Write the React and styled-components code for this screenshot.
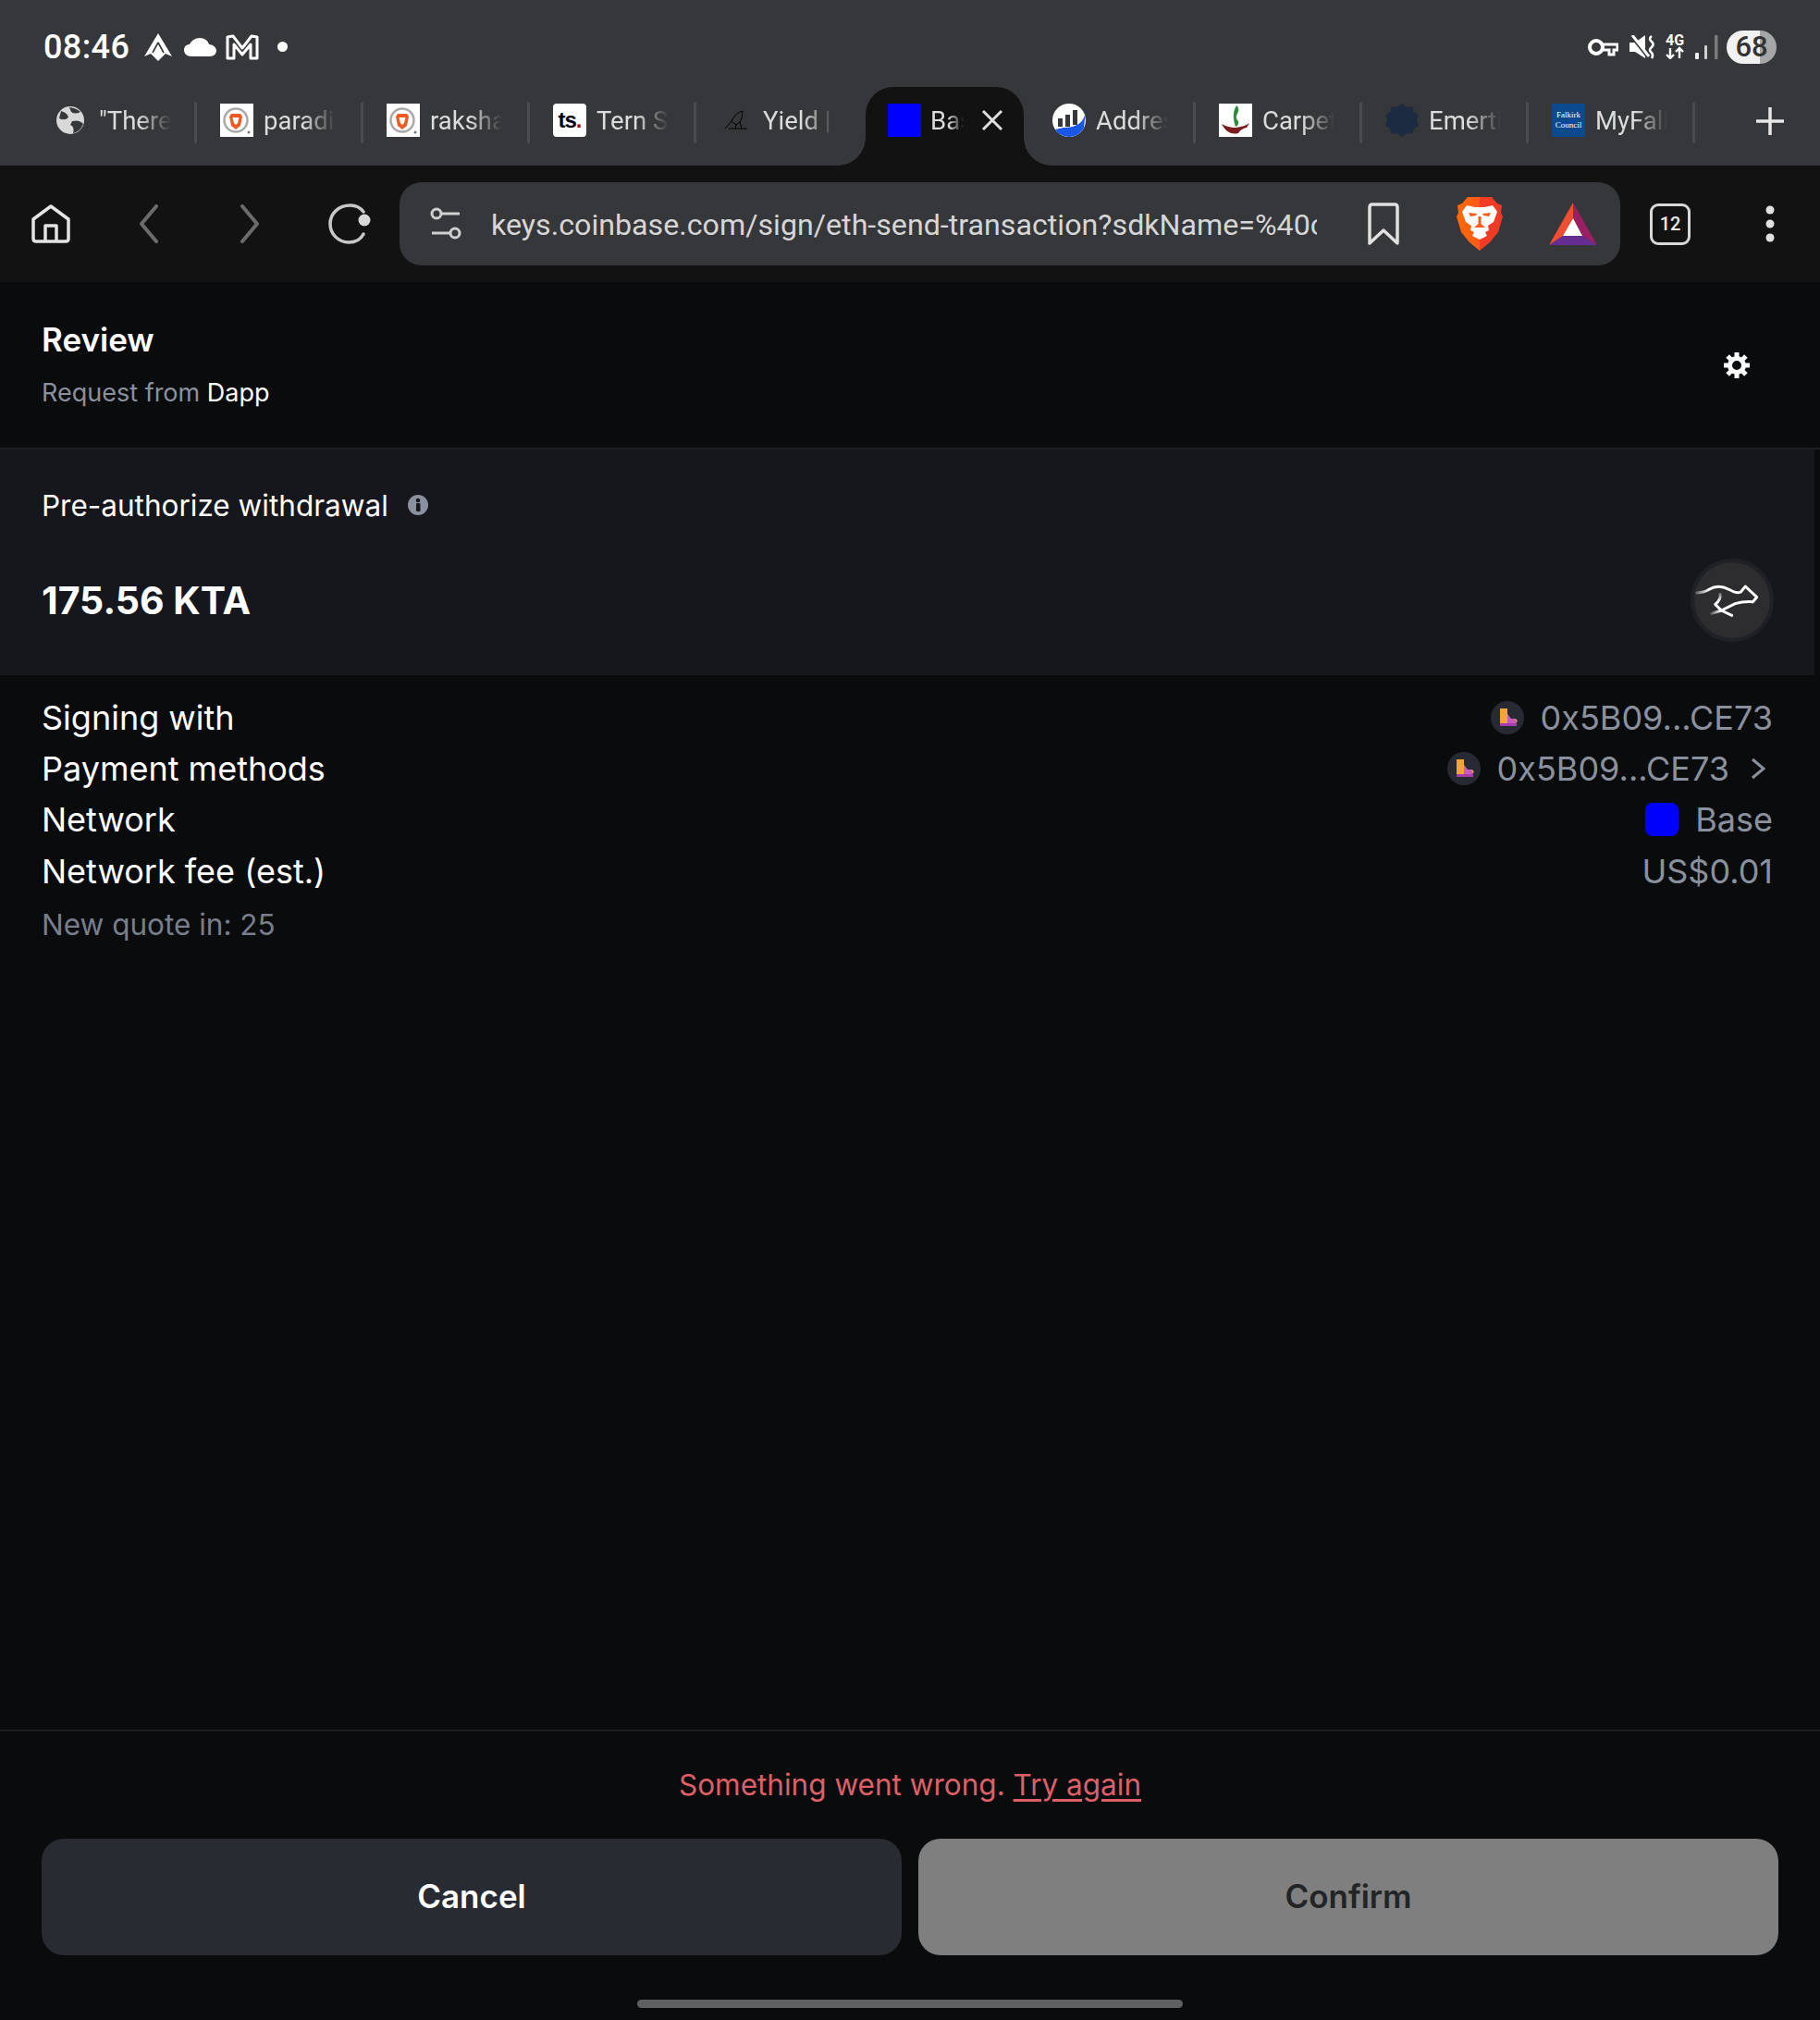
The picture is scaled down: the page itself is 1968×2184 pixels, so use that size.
import React from 'react';
import styled, { createGlobalStyle } from 'styled-components';

const GlobalStyle = createGlobalStyle`
    html, body {
        margin: 0;
        padding: 0;
        background: #0a0b0d;
    }
    * {
        box-sizing: border-box;
    }
`;

const Screen = styled.div`
    width: 1968px;
    height: 2184px;
    display: flex;
    flex-direction: column;
    overflow: hidden;
    background: #0a0b0d;
    font-family: Inter, "Noto Sans", sans-serif;
`;

const Chrome = styled.div`
    background: #36373a;
    font-family: Roboto, sans-serif;
`;

const StatusBar = styled.div`
    height: 94px;
    display: flex;
    align-items: center;
    justify-content: space-between;
    padding: 7px 47px 0;
    color: #fff;
`;

const StatusGroup = styled.div`
    display: flex;
    align-items: center;
`;

const Clock = styled.span`
    font-size: 36px;
    font-weight: 500;
    letter-spacing: 0.4px;
    margin-right: 15px;
`;

const Battery = styled.div`
    width: 54px;
    height: 36px;
    border-radius: 18px;
    margin-left: 9px;
    display: flex;
    align-items: center;
    justify-content: center;
    font-size: 31px;
    font-weight: 500;
    color: #333;
    background: linear-gradient(90deg, #f1f1f1 0, #f1f1f1 66%, #a6a6a6 66%, #a6a6a6 100%);
`;

const TabStrip = styled.div`
    height: 85px;
    display: flex;
    padding: 0 39px 0 32px;
`;

const Tab = styled.div`
    position: relative;
    width: 180px;
    height: 85px;
    padding: 0 0 14px ${({ $first }) => ($first ? 29 : 26)}px;
    display: flex;
    align-items: center;
    gap: ${({ $first }) => ($first ? 16 : 11)}px;
    &::after {
        content: '';
        position: absolute;
        right: -1px;
        top: 16px;
        width: 3px;
        height: 45px;
        border-radius: 2px;
        background: ${({ $noSep }) => ($noSep ? 'transparent' : '#4a4b4e')};
    }
`;

const ActiveTab = styled.div`
    position: relative;
    width: 171px;
    height: 85px;
    margin: 0 5px 0 4px;
    padding: 0 0 14px 24px;
    display: flex;
    align-items: center;
    gap: 10px;
    background: #121212;
    border-radius: 30px 30px 0 0;
    &::before,
    &::after {
        content: '';
        position: absolute;
        bottom: 0;
        width: 30px;
        height: 30px;
    }
    &::before {
        left: -30px;
        background: radial-gradient(circle at 0 0, transparent 29.5px, #121212 30px);
    }
    &::after {
        right: -30px;
        background: radial-gradient(circle at 100% 0, transparent 29.5px, #121212 30px);
    }
`;

const TabTitle = styled.span`
    width: ${({ $width }) => $width || 78}px;
    margin-top: 2px;
    overflow: hidden;
    white-space: nowrap;
    font-size: 27.5px;
    color: #dcdcdc;
    -webkit-mask-image: linear-gradient(90deg, #000 55%, transparent 100%);
    mask-image: linear-gradient(90deg, #000 55%, transparent 100%);
`;

const Favicon = styled.div`
    width: 36px;
    height: 36px;
    flex: none;
    display: flex;
    align-items: center;
    justify-content: center;
    overflow: hidden;
    background: ${({ $bg }) => $bg || 'transparent'};
    border-radius: ${({ $round }) => $round || 0}px;
`;

const TsMark = styled.span`
    font-family: "Liberation Sans", sans-serif;
    font-size: 24px;
    font-weight: 700;
    color: #000;
    letter-spacing: -1px;
    & > em {
        color: #a01020;
        font-style: normal;
    }
`;

const CouncilMark = styled.span`
    font-family: "Liberation Serif", serif;
    font-size: 9px;
    line-height: 11px;
    color: #fff;
    text-align: center;
`;

const BlueSquare = styled.div`
    width: 36px;
    height: 36px;
    background: #0000ff;
    flex: none;
`;

const PlusButton = styled.div`
    margin: 0 0 12px auto;
    align-self: center;
    display: flex;
`;

const Toolbar = styled.div`
    height: 126px;
    background: #121212;
    display: flex;
    align-items: center;
    padding: 0 0 0 34px;
    font-family: Roboto, sans-serif;
`;

const ToolIcon = styled.div`
    width: ${({ $w }) => $w}px;
    margin-right: ${({ $mr }) => $mr || 0}px;
    display: flex;
    justify-content: center;
    flex: none;
`;

const UrlBar = styled.div`
    width: 1320px;
    height: 90px;
    border-radius: 24px;
    background: #36373a;
    display: flex;
    align-items: center;
    padding-left: 33px;
    flex: none;
`;

const UrlText = styled.div`
    width: 893px;
    margin: 1px 55px 0 32px;
    overflow: hidden;
    white-space: nowrap;
    font-size: 32.2px;
    color: #d6d6d6;
    flex: none;
`;

const TabCount = styled.div`
    width: 44px;
    height: 45px;
    border: 3px solid #d8d8d8;
    border-radius: 9px;
    margin: 0 81px 0 32px;
    display: flex;
    align-items: center;
    justify-content: center;
    font-size: 20px;
    font-weight: 500;
    color: #e8e8e8;
    flex: none;
`;

const PageHeader = styled.div`
    height: 181px;
    border-bottom: 2px solid #1c1e24;
    display: flex;
    align-items: center;
    justify-content: space-between;
    padding: 2px 76px 0 45px;
`;

const HeaderTitle = styled.div`
    font-size: 35px;
    font-weight: 600;
    color: #fff;
    line-height: 40px;
    margin-bottom: 18px;
`;

const HeaderSub = styled.div`
    font-size: 27px;
    line-height: 40px;
    color: #8a919e;
    & > b {
        font-weight: 400;
        color: #fff;
    }
`;

const AmountCard = styled.div`
    width: 1962px;
    height: 244px;
    background: #15171c;
    padding: 39px 45px 0;
`;

const CardLabel = styled.div`
    display: flex;
    align-items: center;
    gap: 21px;
    font-size: 31.5px;
    line-height: 44px;
    color: #fff;
`;

const AmountRow = styled.div`
    display: flex;
    align-items: center;
    justify-content: space-between;
    margin: 35px -1px 0 0;
`;

const Amount = styled.div`
    font-size: 41px;
    font-weight: 700;
    color: #fff;
`;

const TokenIcon = styled.div`
    width: 90px;
    height: 90px;
    border-radius: 50%;
    background: #2d2c2e;
    border: 4px solid #1f2127;
    display: flex;
    align-items: center;
    justify-content: center;
`;

const Details = styled.div`
    padding: 18px 51px 0 45px;
`;

const DetailRow = styled.div`
    height: 55.3px;
    display: flex;
    align-items: center;
    justify-content: space-between;
    font-size: 36px;
    color: #fff;
`;

const DetailValue = styled.div`
    display: flex;
    align-items: center;
    gap: 18px;
    color: #8a919e;
`;

const NetworkDot = styled.div`
    width: 36px;
    height: 36px;
    border-radius: 8px;
    background: #0000ff;
`;

const QuoteNote = styled.div`
    font-size: 31.5px;
    line-height: 44px;
    margin-top: 9px;
    color: #787f8c;
`;

const Footer = styled.div`
    margin-top: auto;
    border-top: 2px solid #1c1e24;
    padding: 0 45px;
`;

const ErrorText = styled.div`
    height: 116px;
    padding-bottom: 2px;
    display: flex;
    align-items: center;
    justify-content: center;
    font-size: 31.5px;
    color: #df5f67;
    white-space: pre;
    & > u {
        text-underline-offset: 4px;
    }
`;

const ButtonRow = styled.div`
    display: grid;
    grid-template-columns: 930px 930px;
    gap: 18px;
`;

const ActionButton = styled.div`
    height: 126px;
    padding-bottom: 2px;
    border-radius: 24px;
    display: flex;
    align-items: center;
    justify-content: center;
    font-size: 35px;
    font-weight: 600;
    background: ${({ $disabled }) => ($disabled ? '#7f7f7f' : '#282b31')};
    color: ${({ $disabled }) => ($disabled ? '#222426' : '#fff')};
`;

const HomeBar = styled.div`
    width: 590px;
    height: 9px;
    border-radius: 5px;
    background: #5f6062;
    margin: 48px auto 13px;
`;

function ArrowLogo() {
    return (
        <svg width="32" height="30" viewBox="0 0 32 30" style={{ marginRight: 12 }}>
            <path d="M16 0 L31 25 L24 22 L16 30 L8 22 L1 25 Z" fill="#fff" />
            <path d="M16 10 L10 21 M16 10 L22 21" stroke="#36373a" strokeWidth="1.6" fill="none" />
        </svg>
    );
}

function CloudIcon() {
    return (
        <svg width="35" height="20" viewBox="0 0 35 20" style={{ marginRight: 10 }}>
            <path d="M8 20 C3 20 0 17 0 13 C0 9 3 7 6 7 C8 3 12 0 17 0 C22 0 26 3 27 7 C31 7 35 10 35 14 C35 17 32 20 28 20 Z" fill="#fff" />
        </svg>
    );
}

function MailIcon() {
    return (
        <svg width="36" height="28" viewBox="0 0 36 28" fill="none" stroke="#fff" strokeWidth="3" style={{ marginRight: 20 }}>
            <path d="M2 26 V3 L8 2 L18 15 L28 2 L34 3 V26 H27 V11 L18 22 L9 11 V26 Z" strokeLinejoin="round" />
        </svg>
    );
}

function KeyIcon() {
    return (
        <svg width="33" height="20" viewBox="0 0 33 20" fill="none">
            <circle cx="9" cy="10" r="7" stroke="#fff" strokeWidth="4" />
            <path d="M16 7 H32 V13 H28 V18 H23 V13 H16" stroke="#fff" strokeWidth="3" />
        </svg>
    );
}

function MuteIcon() {
    return (
        <svg width="28" height="26" viewBox="0 0 28 26" fill="#fff" style={{ margin: '0 9px 0 12px' }}>
            <path d="M0 8 H6 L17 0 V25 L6 18 H0 Z" />
            <path d="M1 0 L20 24" stroke="#36373a" strokeWidth="3" />
            <path d="M3 0 L21 23" stroke="#fff" strokeWidth="3" />
            <path d="M24 1 Q20 4 24 7 Q27 10 24 13 Q20 16 24 19 Q26 22 24 25" fill="none" stroke="#fff" strokeWidth="2.6" />
        </svg>
    );
}

function NetworkIcon() {
    return (
        <svg width="24" height="27" viewBox="0 0 24 27" style={{ marginRight: 10 }}>
            <text x="12" y="12" textAnchor="middle" fontFamily="Roboto, sans-serif" fontWeight="700" fontSize="16" fill="#fff">4G</text>
            <path d="M7 15 V26 M3 22 L7 26 L11 22 M17 26 V15 M13 19 L17 15 L21 19" fill="none" stroke="#fff" strokeWidth="2.4" />
        </svg>
    );
}

function SignalIcon() {
    return (
        <svg width="25" height="26" viewBox="0 0 25 26">
            <rect x="0" y="19" width="4" height="7" rx="1" fill="#f1f1f1" />
            <rect x="10" y="11" width="3" height="15" rx="1" fill="#d0d0d0" />
            <rect x="21" y="0" width="3.5" height="26" rx="1" fill="#7a7b7d" />
        </svg>
    );
}

function GlobeFavicon() {
    return (
        <svg width="30" height="30" viewBox="0 0 30 30" style={{ flex: 'none' }}>
            <circle cx="15" cy="15" r="15" fill="#d8d8d8" />
            <path d="M5 5 Q12 7 13 12 Q9 16 3 13 Z M17 16 Q25 14 29 19 Q26 27 18 29 Q20 22 15 20 Z M14 1 Q22 2 26 6 Q20 9 16 6 Z" fill="#36373a" />
        </svg>
    );
}

function BraveFavicon() {
    return (
        <Favicon $bg="#fff">
            <svg width="34" height="34" viewBox="0 0 34 34">
                <circle cx="16" cy="17" r="12.5" fill="none" stroke="#a9a9a9" strokeWidth="2.5" />
                <path d="M11 10 H21 L23 13 L21 23 L16 27 L11 23 L9 13 Z" fill="#ef5a24" />
                <path d="M12.5 14 H19.5 L18 20 L16 22 L14 20 Z" fill="#fff" />
                <circle cx="30" cy="30" r="1.5" fill="#777" />
            </svg>
        </Favicon>
    );
}

function BirdFavicon() {
    return (
        <svg width="26" height="21" viewBox="0 0 26 21" fill="none" stroke="#000" strokeWidth="1">
            <path d="M1 20 L8 12 Q12 3 20 1 Q20 9 17 13 L13 16 L8 12 M13 16 L12 20 M17 13 L19 20 M5 20 H25" />
        </svg>
    );
}

function AddressFavicon() {
    return (
        <svg width="36" height="36" viewBox="0 0 36 36" style={{ flex: 'none' }}>
            <circle cx="18" cy="18" r="18" fill="#fff" />
            <path d="M3 28 A18 18 0 0 0 34 26 L36 8 Q34 26 12 26 Q7 27 3 28 Z" fill="#1a56e8" />
            <rect x="6" y="16" width="5" height="9" fill="#36373a" />
            <rect x="14" y="12" width="5" height="13" fill="#36373a" />
            <rect x="22" y="7" width="5" height="16" fill="#36373a" />
        </svg>
    );
}

function CarpetFavicon() {
    return (
        <Favicon $bg="#fff">
            <svg width="36" height="36" viewBox="0 0 36 36">
                <path d="M19 2 Q23 5 20 11 Q17 15 21 19 Q22 23 18 25 Q16 20 16 16 Q15 9 19 2 Z" fill="#2e8b3d" />
                <path d="M3 22 Q10 26 18 26 Q28 25 33 21 L30 26 Q24 27 21 32 Q14 34 8 29 Q5 26 3 22 Z" fill="#7c1d1d" />
            </svg>
        </Favicon>
    );
}

function BadgeFavicon() {
    return (
        <svg width="36" height="36" viewBox="0 0 36 36" style={{ flex: 'none' }}>
            <path d="M18 0 L23 4 L29 3 L31 9 L36 13 L34 18 L36 24 L31 27 L29 33 L23 32 L18 36 L13 32 L7 33 L5 27 L0 24 L2 18 L0 13 L5 9 L7 3 L13 4 Z" fill="#1b2a41" />
        </svg>
    );
}

function HomeIcon() {
    return (
        <svg width="42" height="42" viewBox="0 0 42 42" fill="none" stroke="#e4e4e4" strokeWidth="3.5" strokeLinejoin="round">
            <path d="M2 16 L21 2 L40 16 V37 Q40 40 37 40 H5 Q2 40 2 37 Z" />
            <path d="M15 40 V23 H27 V40" />
        </svg>
    );
}

function Chevron({ dir, color }) {
    return (
        <svg width="22" height="42" viewBox="0 0 22 42" fill="none" stroke={color} strokeWidth="4" strokeLinecap="round" strokeLinejoin="round">
            <path d={dir === 'left' ? 'M19 2 L3 21 L19 40' : 'M3 2 L19 21 L3 40'} />
        </svg>
    );
}

function ReloadIcon() {
    return (
        <svg width="46" height="44" viewBox="0 0 46 44" fill="none">
            <path d="M38 9 C35 5 30 2 24 2 C11 2 2 11 2 22 C2 33 11 42 22 42 C29 42 35 39 38 33" stroke="#c8c8c8" strokeWidth="3.5" strokeLinecap="round" />
            <circle cx="39" cy="18" r="6.5" fill="#d8d8d8" />
        </svg>
    );
}

function SliderIcon() {
    return (
        <svg width="34" height="36" viewBox="0 0 34 36" fill="none" stroke="#d0d0d0" strokeWidth="3" style={{ flex: 'none' }}>
            <circle cx="7" cy="7" r="5" />
            <path d="M13 7 H32" />
            <circle cx="27" cy="28" r="5" />
            <path d="M2 28 H21" />
        </svg>
    );
}

function BookmarkIcon() {
    return (
        <svg width="34" height="46" viewBox="0 0 34 46" fill="none" stroke="#e0e0e0" strokeWidth="3.5" strokeLinejoin="round" style={{ flex: 'none' }}>
            <path d="M2 5 Q2 2 5 2 H29 Q32 2 32 5 V44 L17 30 L2 44 Z" />
        </svg>
    );
}

function BraveLogo() {
    return (
        <svg width="50" height="58" viewBox="0 0 50 58" style={{ flex: 'none', marginLeft: 62 }}>
            <defs>
                <linearGradient id="braveShield" x1="0" y1="0" x2="1" y2="0">
                    <stop offset="0" stopColor="#ff6a00" />
                    <stop offset="0.5" stopColor="#ff5a1a" />
                    <stop offset="0.5" stopColor="#f33d25" />
                    <stop offset="1" stopColor="#ee3a24" />
                </linearGradient>
            </defs>
            <path d="M12 0 H38 L44 7 L49 9 L48 17 L50 21 L45 38 L36 49 L25 58 L14 49 L5 38 L0 21 L2 17 L1 9 L6 7 Z" fill="url(#braveShield)" />
            <path d="M11 9 L20 11 H30 L39 9 L44 16 L40 27 L34 31 L35 36 L31 38 L33 42 L25 46 L17 42 L19 38 L15 36 L16 31 L10 27 L6 16 Z" fill="#fff" />
            <path d="M13 17 L22 18 L21 20 L15 21 Z M37 17 L28 18 L29 20 L35 21 Z M23.5 21 V29 L19 33 H31 L26.5 29 V21 Z" fill="#ff5a1a" />
        </svg>
    );
}

function BatLogo() {
    return (
        <svg width="52" height="46" viewBox="0 0 52 46" style={{ flex: 'none', marginLeft: 50 }}>
            <path d="M26 0 L0 46 L15 36 L26 17 Z" fill="#f04e30" />
            <path d="M26 0 L52 46 L36 36 L26 17 Z" fill="#9a1f63" />
            <path d="M0 46 H52 L36 36 H15 Z" fill="#662d91" />
            <path d="M26 17 L36 36 H15 Z" fill="#fff" />
        </svg>
    );
}

function MenuDots() {
    return (
        <svg width="10" height="40" viewBox="0 0 10 40" fill="#e0e0e0" style={{ flex: 'none' }}>
            <circle cx="5" cy="5" r="4.5" />
            <circle cx="5" cy="20" r="4.5" />
            <circle cx="5" cy="35" r="4.5" />
        </svg>
    );
}

function GearIcon() {
    return (
        <svg width="28" height="28" viewBox="0 0 28 28" style={{ marginTop: -2 }}>
            <g fill="#fff">
                {[0, 45, 90, 135, 180, 225, 270, 315].map((a) => (
                    <rect key={a} x="11.5" y="0" width="5" height="8" transform={`rotate(${a} 14 14)`} />
                ))}
            </g>
            <circle cx="14" cy="14" r="7.5" fill="none" stroke="#fff" strokeWidth="5" />
        </svg>
    );
}

function InfoIcon() {
    return (
        <svg width="22" height="22" viewBox="0 0 22 22" style={{ marginTop: -2 }}>
            <circle cx="11" cy="11" r="11" fill="#8a919e" />
            <rect x="9" y="9" width="4.5" height="9" rx="1" fill="#15171c" />
            <circle cx="11" cy="6" r="2.3" fill="#15171c" />
        </svg>
    );
}

function CheetahIcon() {
    return (
        <svg width="90" height="90" viewBox="80 40 270 270" fill="none" strokeWidth="9" strokeLinecap="round" strokeLinejoin="round" style={{ flex: 'none', margin: -4 }}>
            <defs>
                <linearGradient id="tailFade" gradientUnits="userSpaceOnUse" x1="97" y1="0" x2="140" y2="0">
                    <stop offset="0" stopColor="#fff" stopOpacity="0.25" />
                    <stop offset="1" stopColor="#fff" />
                </linearGradient>
                <linearGradient id="legFade" gradientUnits="userSpaceOnUse" x1="0" y1="150" x2="0" y2="178">
                    <stop offset="0" stopColor="#fff" stopOpacity="0.25" />
                    <stop offset="1" stopColor="#fff" />
                </linearGradient>
                <linearGradient id="pawFade" gradientUnits="userSpaceOnUse" x1="146" y1="0" x2="178" y2="0">
                    <stop offset="0" stopColor="#fff" stopOpacity="0.2" />
                    <stop offset="1" stopColor="#fff" />
                </linearGradient>
            </defs>
            <path d="M100 151 Q125 150 140 140 Q170 122 205 140 Q230 155 243 148 L258 130 L295 165 L282 180 Q250 178 225 186 L180 208 L214 224" stroke="url(#tailFade)" />
            <path d="M176 155 Q180 172 160 188 L180 208" stroke="url(#legFade)" />
            <path d="M180 208 L148 218" stroke="url(#pawFade)" />
        </svg>
    );
}

function WalletAvatar() {
    return (
        <svg width="36" height="36" viewBox="0 0 36 36" style={{ flex: 'none' }}>
            <circle cx="18" cy="18" r="18" fill="#272a33" />
            <path d="M10 8 H18 V14 L21 19 H27 L29 22 L26 24 H10 Z" fill="#f5a536" />
            <path d="M18 14 L22 19 H26 L28 23 L26 25 H18 Z" fill="#c75ac0" />
            <rect x="10" y="24" width="18" height="3" fill="#a83ca8" />
        </svg>
    );
}

const otherTabs = [
    { title: 'Addres', icon: <AddressFavicon /> },
    { title: 'Carpet', icon: <CarpetFavicon /> },
    { title: 'Emerti', icon: <BadgeFavicon /> },
    {
        title: 'MyFalk',
        icon: (
            <Favicon $bg="#0b4a8f">
                <CouncilMark>Falkirk<br />Council</CouncilMark>
            </Favicon>
        ),
    },
];

export default function App() {
    return (
        <Screen>
            <GlobalStyle />
            <Chrome>
                <StatusBar>
                    <StatusGroup>
                        <Clock>08:46</Clock>
                        <ArrowLogo />
                        <CloudIcon />
                        <MailIcon />
                        <svg width="11" height="11" viewBox="0 0 11 11"><circle cx="5.5" cy="5.5" r="5.5" fill="#fff" /></svg>
                    </StatusGroup>
                    <StatusGroup>
                        <KeyIcon />
                        <MuteIcon />
                        <NetworkIcon />
                        <SignalIcon />
                        <Battery>68</Battery>
                    </StatusGroup>
                </StatusBar>
                <TabStrip>
                    <Tab $first>
                        <GlobeFavicon />
                        <TabTitle>"There</TabTitle>
                    </Tab>
                    <Tab>
                        <BraveFavicon />
                        <TabTitle>paradi</TabTitle>
                    </Tab>
                    <Tab>
                        <BraveFavicon />
                        <TabTitle>raksha</TabTitle>
                    </Tab>
                    <Tab>
                        <Favicon $bg="#fff" $round={4}>
                            <TsMark>ts<em>.</em></TsMark>
                        </Favicon>
                        <TabTitle>Tern S</TabTitle>
                    </Tab>
                    <Tab $noSep>
                        <Favicon><BirdFavicon /></Favicon>
                        <TabTitle>Yield |</TabTitle>
                    </Tab>
                    <ActiveTab>
                        <BlueSquare />
                        <TabTitle $width={36}>Base</TabTitle>
                        <svg width="24" height="24" viewBox="0 0 24 24" stroke="#e0e0e0" strokeWidth="3" style={{ marginLeft: 9 }}>
                            <path d="M2 2 L22 22 M22 2 L2 22" />
                        </svg>
                    </ActiveTab>
                    {otherTabs.map((t) => (
                        <Tab key={t.title}>
                            {t.icon}
                            <TabTitle>{t.title}</TabTitle>
                        </Tab>
                    ))}
                    <PlusButton>
                        <svg width="30" height="30" viewBox="0 0 30 30" stroke="#e8e8e8" strokeWidth="3.5">
                            <path d="M15 0 V30 M0 15 H30" />
                        </svg>
                    </PlusButton>
                </TabStrip>
            </Chrome>
            <Toolbar>
                <ToolIcon $w={42} $mr={74}><HomeIcon /></ToolIcon>
                <ToolIcon $w={22} $mr={87}><Chevron dir="left" color="#6b6b6b" /></ToolIcon>
                <ToolIcon $w={22} $mr={74}><Chevron dir="right" color="#6b6b6b" /></ToolIcon>
                <ToolIcon $w={46} $mr={31}><ReloadIcon /></ToolIcon>
                <UrlBar>
                    <SliderIcon />
                    <UrlText>keys.coinbase.com/sign/eth-send-transaction?sdkName=%40coinbase</UrlText>
                    <BookmarkIcon />
                    <BraveLogo />
                    <BatLogo />
                </UrlBar>
                <TabCount>12</TabCount>
                <MenuDots />
            </Toolbar>
            <PageHeader>
                <div>
                    <HeaderTitle>Review</HeaderTitle>
                    <HeaderSub>Request from <b>Dapp</b></HeaderSub>
                </div>
                <GearIcon />
            </PageHeader>
            <AmountCard>
                <CardLabel>Pre-authorize withdrawal <InfoIcon /></CardLabel>
                <AmountRow>
                    <Amount>175.56 KTA</Amount>
                    <TokenIcon><CheetahIcon /></TokenIcon>
                </AmountRow>
            </AmountCard>
            <Details>
                <DetailRow>
                    Signing with
                    <DetailValue><WalletAvatar />0x5B09...CE73</DetailValue>
                </DetailRow>
                <DetailRow>
                    Payment methods
                    <DetailValue>
                        <WalletAvatar />0x5B09...CE73
                        <svg width="16" height="24" viewBox="0 0 16 24" fill="none" stroke="#8a919e" strokeWidth="3" style={{ margin: '0 8px 0 5px', flex: 'none' }}>
                            <path d="M2 2 L14 12 L2 22" />
                        </svg>
                    </DetailValue>
                </DetailRow>
                <DetailRow>
                    Network
                    <DetailValue><NetworkDot />Base</DetailValue>
                </DetailRow>
                <DetailRow>
                    Network fee (est.)
                    <DetailValue>US$0.01</DetailValue>
                </DetailRow>
                <QuoteNote>New quote in: 25</QuoteNote>
            </Details>
            <Footer>
                <ErrorText>Something went wrong. <u>Try again</u></ErrorText>
                <ButtonRow>
                    <ActionButton>Cancel</ActionButton>
                    <ActionButton $disabled>Confirm</ActionButton>
                </ButtonRow>
                <HomeBar />
            </Footer>
        </Screen>
    );
}
